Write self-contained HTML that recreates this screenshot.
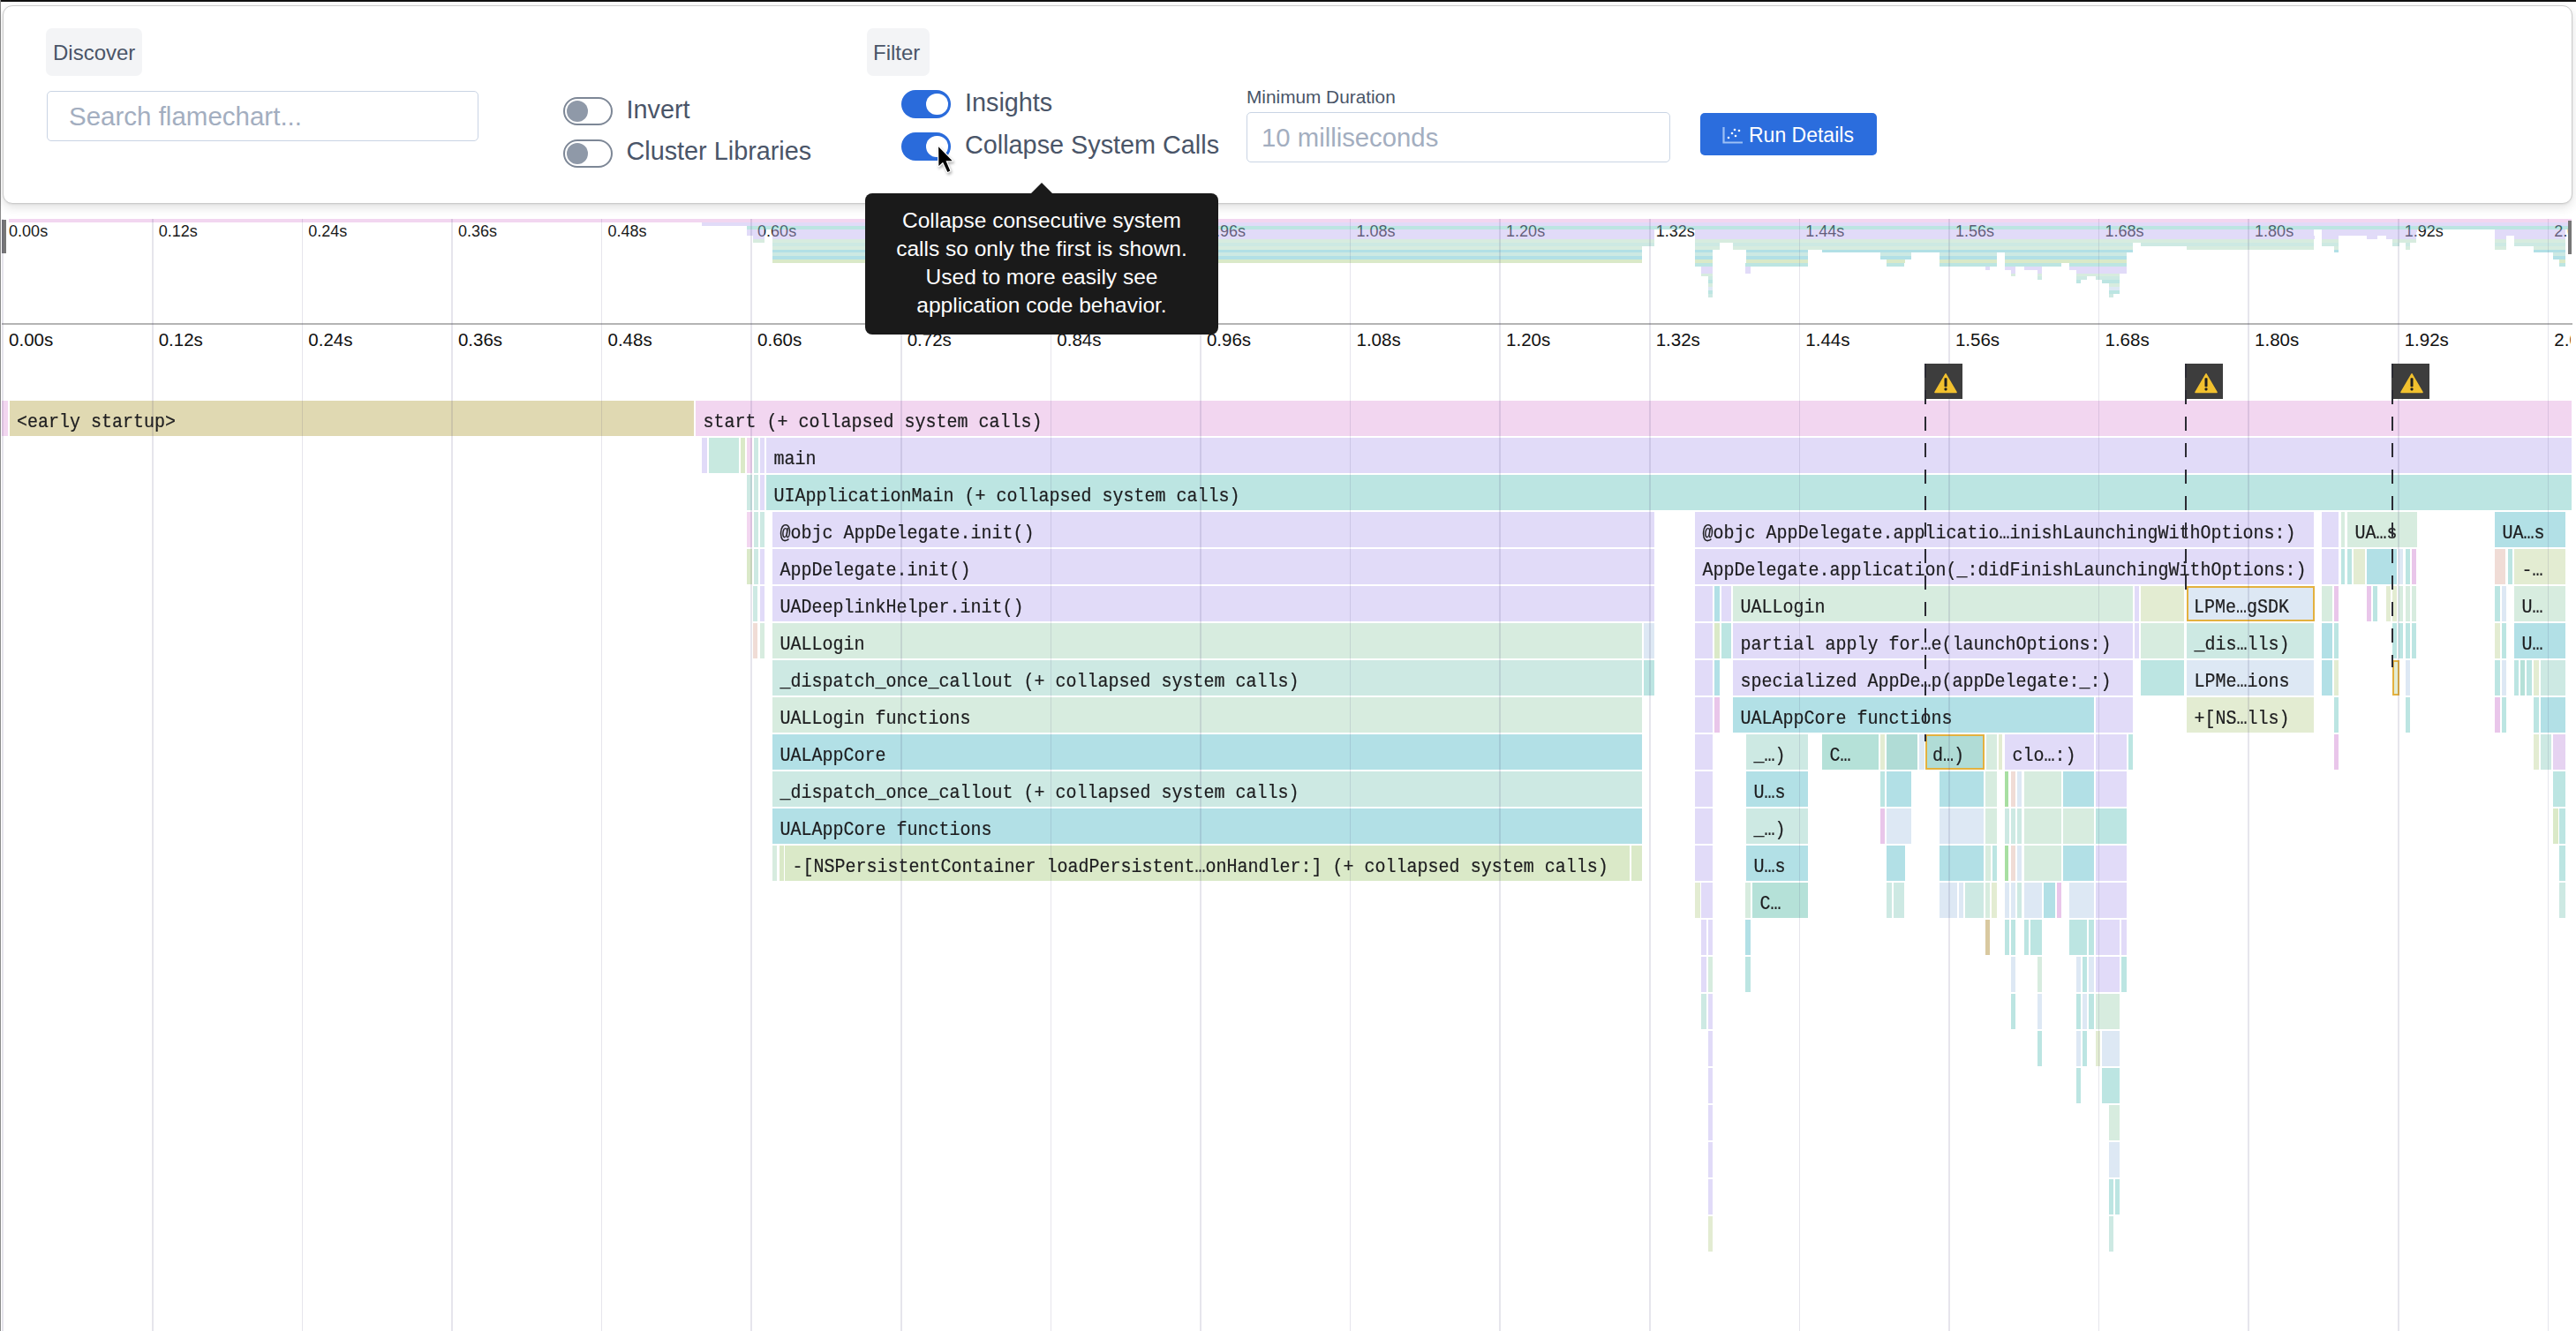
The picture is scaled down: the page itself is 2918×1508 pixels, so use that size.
<!DOCTYPE html><html><head><meta charset="utf-8"><style>
html,body{margin:0;padding:0;background:#fff;}
body{width:2918px;height:1508px;overflow:hidden;position:relative;font-family:"Liberation Sans",sans-serif;}
.a{position:absolute;}
.t{position:absolute;white-space:pre;line-height:1;}
.b{position:absolute;height:40px;overflow:hidden;}
.bt{position:absolute;left:0;top:0;white-space:pre;font:20px/1 "Liberation Mono",monospace;color:#1d1d1f;transform:scaleY(1.13);transform-origin:0 15.33px;-webkit-text-stroke:0.2px #1d1d1f;}
.m{position:absolute;}
.g{position:absolute;width:1.6px;background:rgba(80,70,120,0.14);}

</style></head><body>
<div class="a" style="left:0;top:0;width:2918px;height:2px;background:#111"></div>
<div class="a" style="left:0;top:0;width:1px;height:1508px;background:#8a8a8a"></div>
<div class="a" style="left:0;top:240px;width:2912px;height:40px;overflow:hidden">
<div class="t" style="left:10.1px;top:12.76px;font-size:18px;color:#1a1a1a">0.00s</div>
<div class="t" style="left:179.7px;top:12.76px;font-size:18px;color:#1a1a1a">0.12s</div>
<div class="t" style="left:349.3px;top:12.76px;font-size:18px;color:#1a1a1a">0.24s</div>
<div class="t" style="left:518.9px;top:12.76px;font-size:18px;color:#1a1a1a">0.36s</div>
<div class="t" style="left:688.5px;top:12.76px;font-size:18px;color:#1a1a1a">0.48s</div>
<div class="t" style="left:858.1px;top:12.76px;font-size:18px;color:#1a1a1a">0.60s</div>
<div class="t" style="left:1027.7px;top:12.76px;font-size:18px;color:#1a1a1a">0.72s</div>
<div class="t" style="left:1197.3px;top:12.76px;font-size:18px;color:#1a1a1a">0.84s</div>
<div class="t" style="left:1366.9px;top:12.76px;font-size:18px;color:#1a1a1a">0.96s</div>
<div class="t" style="left:1536.5px;top:12.76px;font-size:18px;color:#1a1a1a">1.08s</div>
<div class="t" style="left:1706.1px;top:12.76px;font-size:18px;color:#1a1a1a">1.20s</div>
<div class="t" style="left:1875.7px;top:12.76px;font-size:18px;color:#1a1a1a">1.32s</div>
<div class="t" style="left:2045.3px;top:12.76px;font-size:18px;color:#1a1a1a">1.44s</div>
<div class="t" style="left:2214.9px;top:12.76px;font-size:18px;color:#1a1a1a">1.56s</div>
<div class="t" style="left:2384.5px;top:12.76px;font-size:18px;color:#1a1a1a">1.68s</div>
<div class="t" style="left:2554.1px;top:12.76px;font-size:18px;color:#1a1a1a">1.80s</div>
<div class="t" style="left:2723.7px;top:12.76px;font-size:18px;color:#1a1a1a">1.92s</div>
<div class="t" style="left:2893.3px;top:12.76px;font-size:18px;color:#1a1a1a">2.04s</div>
</div>
<div class="m" style="left:9.5px;top:248px;width:2903px;height:4px;background:rgba(226,164,222,0.45)"></div>
<div class="m" style="left:795px;top:252px;width:2117.5px;height:4px;background:rgba(188,175,239,0.45)"></div>
<div class="m" style="left:846px;top:256px;width:2066.5px;height:4px;background:rgba(106,197,191,0.45)"></div>
<div class="m" style="left:846px;top:260px;width:20px;height:3px;background:rgba(188,175,239,0.45)"></div>
<div class="m" style="left:875px;top:260px;width:999px;height:3px;background:rgba(188,175,239,0.45)"></div>
<div class="m" style="left:1920px;top:260px;width:700.5px;height:3px;background:rgba(188,175,239,0.45)"></div>
<div class="m" style="left:2630px;top:260px;width:108px;height:3px;background:rgba(188,175,239,0.45)"></div>
<div class="m" style="left:2826px;top:260px;width:79.5px;height:3px;background:rgba(188,175,239,0.45)"></div>
<div class="m" style="left:846px;top:263px;width:20px;height:4px;background:rgba(188,175,239,0.45)"></div>
<div class="m" style="left:875px;top:263px;width:999px;height:4px;background:rgba(188,175,239,0.45)"></div>
<div class="m" style="left:1920px;top:263px;width:700.5px;height:4px;background:rgba(188,175,239,0.45)"></div>
<div class="m" style="left:2630px;top:263px;width:107px;height:4px;background:rgba(188,175,239,0.45)"></div>
<div class="m" style="left:2826px;top:263px;width:79.5px;height:4px;background:rgba(188,175,239,0.45)"></div>
<div class="m" style="left:853px;top:267px;width:13px;height:4px;background:rgba(188,175,239,0.45)"></div>
<div class="m" style="left:875px;top:267px;width:999px;height:4px;background:rgba(188,175,239,0.45)"></div>
<div class="m" style="left:1920px;top:267px;width:701.5px;height:4px;background:rgba(188,175,239,0.45)"></div>
<div class="m" style="left:2630px;top:267px;width:19px;height:4px;background:rgba(188,175,239,0.45)"></div>
<div class="m" style="left:2681px;top:267px;width:12px;height:4px;background:rgba(188,175,239,0.45)"></div>
<div class="m" style="left:2703px;top:267px;width:34px;height:4px;background:rgba(188,175,239,0.45)"></div>
<div class="m" style="left:2826px;top:267px;width:13px;height:4px;background:rgba(188,175,239,0.45)"></div>
<div class="m" style="left:2848px;top:267px;width:57.5px;height:4px;background:rgba(188,175,239,0.45)"></div>
<div class="m" style="left:853px;top:271px;width:13px;height:4px;background:rgba(166,213,184,0.45)"></div>
<div class="m" style="left:875px;top:271px;width:999px;height:4px;background:rgba(166,213,184,0.45)"></div>
<div class="m" style="left:1920px;top:271px;width:700.5px;height:4px;background:rgba(166,213,184,0.45)"></div>
<div class="m" style="left:2630px;top:271px;width:19px;height:4px;background:rgba(166,213,184,0.45)"></div>
<div class="m" style="left:2710px;top:271px;width:27px;height:4px;background:rgba(166,213,184,0.45)"></div>
<div class="m" style="left:2826px;top:271px;width:13px;height:4px;background:rgba(166,213,184,0.45)"></div>
<div class="m" style="left:2848px;top:271px;width:57.5px;height:4px;background:rgba(166,213,184,0.45)"></div>
<div class="m" style="left:875px;top:275px;width:999px;height:4px;background:rgba(144,206,193,0.45)"></div>
<div class="m" style="left:1920px;top:275px;width:27.5px;height:4px;background:rgba(144,206,193,0.45)"></div>
<div class="m" style="left:1963px;top:275px;width:453px;height:4px;background:rgba(144,206,193,0.45)"></div>
<div class="m" style="left:2425px;top:275px;width:195.5px;height:4px;background:rgba(144,206,193,0.45)"></div>
<div class="m" style="left:2630px;top:275px;width:19px;height:4px;background:rgba(144,206,193,0.45)"></div>
<div class="m" style="left:2709.5px;top:275px;width:8px;height:4px;background:rgba(144,206,193,0.45)"></div>
<div class="m" style="left:2725px;top:275px;width:5px;height:4px;background:rgba(144,206,193,0.45)"></div>
<div class="m" style="left:2826px;top:275px;width:13px;height:4px;background:rgba(144,206,193,0.45)"></div>
<div class="m" style="left:2848px;top:275px;width:57.5px;height:4px;background:rgba(144,206,193,0.45)"></div>
<div class="m" style="left:875px;top:279px;width:985px;height:4px;background:rgba(166,213,184,0.45)"></div>
<div class="m" style="left:1920px;top:279px;width:27.5px;height:4px;background:rgba(166,213,184,0.45)"></div>
<div class="m" style="left:1963px;top:279px;width:453px;height:4px;background:rgba(166,213,184,0.45)"></div>
<div class="m" style="left:2477px;top:279px;width:143.5px;height:4px;background:rgba(166,213,184,0.45)"></div>
<div class="m" style="left:2644px;top:279px;width:5px;height:4px;background:rgba(166,213,184,0.45)"></div>
<div class="m" style="left:2725px;top:279px;width:5px;height:4px;background:rgba(166,213,184,0.45)"></div>
<div class="m" style="left:2826px;top:279px;width:13px;height:4px;background:rgba(166,213,184,0.45)"></div>
<div class="m" style="left:2870px;top:279px;width:35.5px;height:4px;background:rgba(166,213,184,0.45)"></div>
<div class="m" style="left:875px;top:283px;width:985px;height:3px;background:rgba(84,186,199,0.45)"></div>
<div class="m" style="left:1920px;top:283px;width:19.5px;height:3px;background:rgba(84,186,199,0.45)"></div>
<div class="m" style="left:1978px;top:283px;width:70px;height:3px;background:rgba(84,186,199,0.45)"></div>
<div class="m" style="left:2064px;top:283px;width:352px;height:3px;background:rgba(84,186,199,0.45)"></div>
<div class="m" style="left:2644px;top:283px;width:5px;height:3px;background:rgba(84,186,199,0.45)"></div>
<div class="m" style="left:2870px;top:283px;width:35.5px;height:3px;background:rgba(84,186,199,0.45)"></div>
<div class="m" style="left:875px;top:286px;width:985px;height:4px;background:rgba(144,206,193,0.45)"></div>
<div class="m" style="left:1920px;top:286px;width:19.5px;height:4px;background:rgba(144,206,193,0.45)"></div>
<div class="m" style="left:1978px;top:286px;width:70px;height:4px;background:rgba(144,206,193,0.45)"></div>
<div class="m" style="left:2130px;top:286px;width:35px;height:4px;background:rgba(144,206,193,0.45)"></div>
<div class="m" style="left:2197px;top:286px;width:65px;height:4px;background:rgba(144,206,193,0.45)"></div>
<div class="m" style="left:2271px;top:286px;width:138px;height:4px;background:rgba(144,206,193,0.45)"></div>
<div class="m" style="left:2892px;top:286px;width:13.5px;height:4px;background:rgba(144,206,193,0.45)"></div>
<div class="m" style="left:875px;top:290px;width:985px;height:4px;background:rgba(84,186,199,0.45)"></div>
<div class="m" style="left:1920px;top:290px;width:19.5px;height:4px;background:rgba(84,186,199,0.45)"></div>
<div class="m" style="left:1978px;top:290px;width:70px;height:4px;background:rgba(84,186,199,0.45)"></div>
<div class="m" style="left:2130px;top:290px;width:35px;height:4px;background:rgba(84,186,199,0.45)"></div>
<div class="m" style="left:2197px;top:290px;width:65px;height:4px;background:rgba(84,186,199,0.45)"></div>
<div class="m" style="left:2271px;top:290px;width:138px;height:4px;background:rgba(84,186,199,0.45)"></div>
<div class="m" style="left:2892px;top:290px;width:13.5px;height:4px;background:rgba(84,186,199,0.45)"></div>
<div class="m" style="left:875px;top:294px;width:985px;height:4px;background:rgba(173,206,133,0.45)"></div>
<div class="m" style="left:1920px;top:294px;width:19.5px;height:4px;background:rgba(173,206,133,0.45)"></div>
<div class="m" style="left:1978px;top:294px;width:70px;height:4px;background:rgba(173,206,133,0.45)"></div>
<div class="m" style="left:2137px;top:294px;width:21px;height:4px;background:rgba(173,206,133,0.45)"></div>
<div class="m" style="left:2197px;top:294px;width:65px;height:4px;background:rgba(173,206,133,0.45)"></div>
<div class="m" style="left:2271px;top:294px;width:138px;height:4px;background:rgba(173,206,133,0.45)"></div>
<div class="m" style="left:2899px;top:294px;width:6.5px;height:4px;background:rgba(173,206,133,0.45)"></div>
<div class="m" style="left:1920px;top:298px;width:19.5px;height:4px;background:rgba(106,197,191,0.45)"></div>
<div class="m" style="left:1977px;top:298px;width:71px;height:4px;background:rgba(106,197,191,0.45)"></div>
<div class="m" style="left:2137px;top:298px;width:20px;height:4px;background:rgba(106,197,191,0.45)"></div>
<div class="m" style="left:2197px;top:298px;width:65px;height:4px;background:rgba(106,197,191,0.45)"></div>
<div class="m" style="left:2271px;top:298px;width:64px;height:4px;background:rgba(106,197,191,0.45)"></div>
<div class="m" style="left:2344px;top:298px;width:65px;height:4px;background:rgba(106,197,191,0.45)"></div>
<div class="m" style="left:2899px;top:298px;width:6.5px;height:4px;background:rgba(106,197,191,0.45)"></div>
<div class="m" style="left:1927px;top:302px;width:12.5px;height:4px;background:rgba(188,175,239,0.45)"></div>
<div class="m" style="left:1977px;top:302px;width:6px;height:4px;background:rgba(188,175,239,0.45)"></div>
<div class="m" style="left:2249px;top:302px;width:5px;height:4px;background:rgba(188,175,239,0.45)"></div>
<div class="m" style="left:2271px;top:302px;width:12px;height:4px;background:rgba(188,175,239,0.45)"></div>
<div class="m" style="left:2293px;top:302px;width:20px;height:4px;background:rgba(188,175,239,0.45)"></div>
<div class="m" style="left:2344px;top:302px;width:65px;height:4px;background:rgba(188,175,239,0.45)"></div>
<div class="m" style="left:1927px;top:306px;width:12.5px;height:4px;background:rgba(188,175,239,0.45)"></div>
<div class="m" style="left:1977px;top:306px;width:6px;height:4px;background:rgba(188,175,239,0.45)"></div>
<div class="m" style="left:2278px;top:306px;width:5px;height:4px;background:rgba(188,175,239,0.45)"></div>
<div class="m" style="left:2308px;top:306px;width:5px;height:4px;background:rgba(188,175,239,0.45)"></div>
<div class="m" style="left:2352px;top:306px;width:57px;height:4px;background:rgba(188,175,239,0.45)"></div>
<div class="m" style="left:1927px;top:310px;width:12.5px;height:3px;background:rgba(166,213,184,0.45)"></div>
<div class="m" style="left:2278px;top:310px;width:5px;height:3px;background:rgba(166,213,184,0.45)"></div>
<div class="m" style="left:2308px;top:310px;width:5px;height:3px;background:rgba(166,213,184,0.45)"></div>
<div class="m" style="left:2352px;top:310px;width:49px;height:3px;background:rgba(166,213,184,0.45)"></div>
<div class="m" style="left:1934.5px;top:313px;width:5px;height:4px;background:rgba(144,206,193,0.45)"></div>
<div class="m" style="left:2308px;top:313px;width:5px;height:4px;background:rgba(144,206,193,0.45)"></div>
<div class="m" style="left:2352px;top:313px;width:12px;height:4px;background:rgba(144,206,193,0.45)"></div>
<div class="m" style="left:2374px;top:313px;width:27px;height:4px;background:rgba(144,206,193,0.45)"></div>
<div class="m" style="left:1934.5px;top:317px;width:5px;height:4px;background:rgba(106,197,191,0.45)"></div>
<div class="m" style="left:2352px;top:317px;width:5px;height:4px;background:rgba(106,197,191,0.45)"></div>
<div class="m" style="left:2381px;top:317px;width:20px;height:4px;background:rgba(106,197,191,0.45)"></div>
<div class="m" style="left:1934.5px;top:321px;width:5px;height:4px;background:rgba(166,213,184,0.45)"></div>
<div class="m" style="left:2389px;top:321px;width:12px;height:4px;background:rgba(166,213,184,0.45)"></div>
<div class="m" style="left:1934.5px;top:325px;width:5px;height:4px;background:rgba(179,204,231,0.45)"></div>
<div class="m" style="left:2389px;top:325px;width:12px;height:4px;background:rgba(179,204,231,0.45)"></div>
<div class="m" style="left:1934.5px;top:329px;width:5px;height:4px;background:rgba(106,197,191,0.45)"></div>
<div class="m" style="left:2389px;top:329px;width:12px;height:4px;background:rgba(106,197,191,0.45)"></div>
<div class="m" style="left:1934.5px;top:333px;width:5px;height:4px;background:rgba(144,206,193,0.45)"></div>
<div class="m" style="left:2389px;top:333px;width:5px;height:4px;background:rgba(144,206,193,0.45)"></div>
<div class="a" style="left:2px;top:249px;width:5px;height:38px;background:#777"></div>
<div class="a" style="left:2908.5px;top:249.5px;width:4px;height:38px;background:#777"></div>
<div class="a" style="left:2px;top:365.8px;width:2912px;height:2px;background:#b4b4b4"></div>
<div class="a" style="left:0;top:368px;width:2912px;height:40px;overflow:hidden">
<div class="t" style="left:10.1px;top:6.65px;font-size:20.5px;color:#111">0.00s</div>
<div class="t" style="left:179.7px;top:6.65px;font-size:20.5px;color:#111">0.12s</div>
<div class="t" style="left:349.3px;top:6.65px;font-size:20.5px;color:#111">0.24s</div>
<div class="t" style="left:518.9px;top:6.65px;font-size:20.5px;color:#111">0.36s</div>
<div class="t" style="left:688.5px;top:6.65px;font-size:20.5px;color:#111">0.48s</div>
<div class="t" style="left:858.1px;top:6.65px;font-size:20.5px;color:#111">0.60s</div>
<div class="t" style="left:1027.7px;top:6.65px;font-size:20.5px;color:#111">0.72s</div>
<div class="t" style="left:1197.3px;top:6.65px;font-size:20.5px;color:#111">0.84s</div>
<div class="t" style="left:1366.9px;top:6.65px;font-size:20.5px;color:#111">0.96s</div>
<div class="t" style="left:1536.5px;top:6.65px;font-size:20.5px;color:#111">1.08s</div>
<div class="t" style="left:1706.1px;top:6.65px;font-size:20.5px;color:#111">1.20s</div>
<div class="t" style="left:1875.7px;top:6.65px;font-size:20.5px;color:#111">1.32s</div>
<div class="t" style="left:2045.3px;top:6.65px;font-size:20.5px;color:#111">1.44s</div>
<div class="t" style="left:2214.9px;top:6.65px;font-size:20.5px;color:#111">1.56s</div>
<div class="t" style="left:2384.5px;top:6.65px;font-size:20.5px;color:#111">1.68s</div>
<div class="t" style="left:2554.1px;top:6.65px;font-size:20.5px;color:#111">1.80s</div>
<div class="t" style="left:2723.7px;top:6.65px;font-size:20.5px;color:#111">1.92s</div>
<div class="t" style="left:2893.3px;top:6.65px;font-size:20.5px;color:#111">2.04s</div>
</div>
<div class="b" style="left:2px;top:454px;width:7px;background:#f2d6f0"></div>
<div class="b" style="left:10.5px;top:454px;width:775.5px;background:#e0d9b2"><span class="bt" style="left:8.5px;top:14.67px">&lt;early startup&gt;</span></div>
<div class="b" style="left:788px;top:454px;width:2124.5px;background:#f2d6f0"><span class="bt" style="left:8.5px;top:14.67px">start (+ collapsed system calls)</span></div>
<div class="b" style="left:795px;top:496px;width:5.5px;background:#e1dbf8"></div>
<div class="b" style="left:803px;top:496px;width:34px;background:#c8e9e0"></div>
<div class="b" style="left:839px;top:496px;width:5px;background:#dae9c8"></div>
<div class="b" style="left:846px;top:496px;width:5.5px;background:#f2d6f0"></div>
<div class="b" style="left:854px;top:496px;width:5px;background:#cde9e3"></div>
<div class="b" style="left:861px;top:496px;width:5px;background:#e1dbf8"></div>
<div class="b" style="left:868px;top:496px;width:2044.5px;background:#e1dbf8"><span class="bt" style="left:8.5px;top:14.67px">main</span></div>
<div class="b" style="left:846px;top:538px;width:5.5px;background:#cde9e3"></div>
<div class="b" style="left:854px;top:538px;width:5px;background:#cde9e3"></div>
<div class="b" style="left:861px;top:538px;width:5px;background:#e1dbf8"></div>
<div class="b" style="left:868px;top:538px;width:2044.5px;background:#bce5e2"><span class="bt" style="left:8.5px;top:14.67px">UIApplicationMain (+ collapsed system calls)</span></div>
<div class="b" style="left:846px;top:580px;width:5.5px;background:#f2d6f0"></div>
<div class="b" style="left:854px;top:580px;width:5px;background:#cde9e3"></div>
<div class="b" style="left:861px;top:580px;width:5px;background:#cde9e3"></div>
<div class="b" style="left:875px;top:580px;width:999px;background:#e1dbf8"><span class="bt" style="left:8.5px;top:14.67px">@objc AppDelegate.init()</span></div>
<div class="b" style="left:1920px;top:580px;width:700.5px;background:#e1dbf8"><span class="bt" style="left:8.5px;top:14.67px">@objc AppDelegate.applicatio…inishLaunchingWithOptions:)</span></div>
<div class="b" style="left:2630px;top:580px;width:19px;background:#e1dbf8"></div>
<div class="b" style="left:2651.5px;top:580px;width:4.5px;background:#d7ecdf"></div>
<div class="b" style="left:2659px;top:580px;width:79px;background:#d7ecdf"><span class="bt" style="left:8.5px;top:14.67px">UA…s</span></div>
<div class="b" style="left:2826px;top:580px;width:79.5px;background:#b2e0e6"><span class="bt" style="left:8.5px;top:14.67px">UA…s</span></div>
<div class="b" style="left:846px;top:622px;width:5.5px;background:#dae9c8"></div>
<div class="b" style="left:854px;top:622px;width:5px;background:#cde9e3"></div>
<div class="b" style="left:861px;top:622px;width:5px;background:#e1dbf8"></div>
<div class="b" style="left:875px;top:622px;width:999px;background:#e1dbf8"><span class="bt" style="left:8.5px;top:14.67px">AppDelegate.init()</span></div>
<div class="b" style="left:1920px;top:622px;width:700.5px;background:#e1dbf8"><span class="bt" style="left:8.5px;top:14.67px">AppDelegate.application(_:didFinishLaunchingWithOptions:)</span></div>
<div class="b" style="left:2630px;top:622px;width:19px;background:#e1dbf8"></div>
<div class="b" style="left:2651.5px;top:622px;width:4.5px;background:#bce5e2"></div>
<div class="b" style="left:2659px;top:622px;width:5px;background:#bce5e2"></div>
<div class="b" style="left:2666px;top:622px;width:13px;background:#e3ecd2"></div>
<div class="b" style="left:2681px;top:622px;width:34px;background:#b2e0e6"></div>
<div class="b" style="left:2717px;top:622px;width:5px;background:#dde8f4"></div>
<div class="b" style="left:2725px;top:622px;width:5px;background:#bce5e2"></div>
<div class="b" style="left:2732px;top:622px;width:5px;background:#e9c6ea"></div>
<div class="b" style="left:2826px;top:622px;width:12px;background:#f0dcd6"></div>
<div class="b" style="left:2841px;top:622px;width:5px;background:#bce5e2"></div>
<div class="b" style="left:2848px;top:622px;width:57.5px;background:#e3ecd2"><span class="bt" style="left:8.5px;top:14.67px">-…</span></div>
<div class="b" style="left:853px;top:664px;width:5px;background:#cde9e3"></div>
<div class="b" style="left:861px;top:664px;width:5px;background:#e1dbf8"></div>
<div class="b" style="left:875px;top:664px;width:999px;background:#e1dbf8"><span class="bt" style="left:8.5px;top:14.67px">UADeeplinkHelper.init()</span></div>
<div class="b" style="left:1920px;top:664px;width:19.5px;background:#e1dbf8"></div>
<div class="b" style="left:1941.5px;top:664px;width:6px;background:#b2e0e6"></div>
<div class="b" style="left:1949.5px;top:664px;width:11.5px;background:#e1dbf8"></div>
<div class="b" style="left:1963px;top:664px;width:453px;background:#d7ecdf"><span class="bt" style="left:8.5px;top:14.67px">UALLogin</span></div>
<div class="b" style="left:2418px;top:664px;width:5px;background:#e1dbf8"></div>
<div class="b" style="left:2425px;top:664px;width:49px;background:#e3ecd2"></div>
<div class="b" style="left:2476.5px;top:664px;width:145px;background:#dde8f4;box-shadow:inset 0 0 0 2px #e3b13f"><span class="bt" style="left:8.5px;top:14.67px">LPMe…gSDK</span></div>
<div class="b" style="left:2630px;top:664px;width:12px;background:#d7ecdf"></div>
<div class="b" style="left:2644px;top:664px;width:5px;background:#e9c6ea"></div>
<div class="b" style="left:2681px;top:664px;width:5px;background:#e9c6ea"></div>
<div class="b" style="left:2688px;top:664px;width:5px;background:#bce5e2"></div>
<div class="b" style="left:2703px;top:664px;width:5px;background:#e3ecd2"></div>
<div class="b" style="left:2710px;top:664px;width:5px;background:#e3ecd2"></div>
<div class="b" style="left:2717px;top:664px;width:5px;background:#d7ecdf"></div>
<div class="b" style="left:2725px;top:664px;width:5px;background:#d7ecdf"></div>
<div class="b" style="left:2732px;top:664px;width:5px;background:#d7ecdf"></div>
<div class="b" style="left:2826px;top:664px;width:6px;background:#bce5e2"></div>
<div class="b" style="left:2834px;top:664px;width:5px;background:#dde8f4"></div>
<div class="b" style="left:2848px;top:664px;width:57.5px;background:#d7ecdf"><span class="bt" style="left:8.5px;top:14.67px">U…</span></div>
<div class="b" style="left:853px;top:706px;width:5px;background:#f0dcd6"></div>
<div class="b" style="left:861px;top:706px;width:5px;background:#d7ecdf"></div>
<div class="b" style="left:875px;top:706px;width:985px;background:#d7ecdf"><span class="bt" style="left:8.5px;top:14.67px">UALLogin</span></div>
<div class="b" style="left:1862px;top:706px;width:12px;background:#dde8f4"></div>
<div class="b" style="left:1920px;top:706px;width:19.5px;background:#e1dbf8"></div>
<div class="b" style="left:1941.5px;top:706px;width:6px;background:#dae9c8"></div>
<div class="b" style="left:1949.5px;top:706px;width:11.5px;background:#bce5e2"></div>
<div class="b" style="left:1963px;top:706px;width:453px;background:#e1dbf8"><span class="bt" style="left:8.5px;top:14.67px">partial apply for…e(launchOptions:)</span></div>
<div class="b" style="left:2418px;top:706px;width:5px;background:#e1dbf8"></div>
<div class="b" style="left:2425px;top:706px;width:49px;background:#d7ecdf"></div>
<div class="b" style="left:2477px;top:706px;width:143.5px;background:#cde9e3"><span class="bt" style="left:8.5px;top:14.67px">_dis…lls)</span></div>
<div class="b" style="left:2630px;top:706px;width:12px;background:#b2e0e6"></div>
<div class="b" style="left:2644px;top:706px;width:5px;background:#bce5e2"></div>
<div class="b" style="left:2710px;top:706px;width:5px;background:#bce5e2"></div>
<div class="b" style="left:2717px;top:706px;width:5px;background:#bce5e2"></div>
<div class="b" style="left:2725px;top:706px;width:5px;background:#bce5e2"></div>
<div class="b" style="left:2732px;top:706px;width:5px;background:#bce5e2"></div>
<div class="b" style="left:2826px;top:706px;width:6px;background:#e3ecd2"></div>
<div class="b" style="left:2834px;top:706px;width:5px;background:#bce5e2"></div>
<div class="b" style="left:2848px;top:706px;width:57.5px;background:#b2e0e6"><span class="bt" style="left:8.5px;top:14.67px">U…</span></div>
<div class="b" style="left:875px;top:748px;width:985px;background:#cde9e3"><span class="bt" style="left:8.5px;top:14.67px">_dispatch_once_callout (+ collapsed system calls)</span></div>
<div class="b" style="left:1862px;top:748px;width:12px;background:#bce5e2"></div>
<div class="b" style="left:1920px;top:748px;width:19.5px;background:#e1dbf8"></div>
<div class="b" style="left:1941.5px;top:748px;width:6px;background:#b2e0e6"></div>
<div class="b" style="left:1963px;top:748px;width:453px;background:#e1dbf8"><span class="bt" style="left:8.5px;top:14.67px">specialized AppDe…p(appDelegate:_:)</span></div>
<div class="b" style="left:2425px;top:748px;width:49px;background:#bce5e2"></div>
<div class="b" style="left:2477px;top:748px;width:143.5px;background:#dde8f4"><span class="bt" style="left:8.5px;top:14.67px">LPMe…ions</span></div>
<div class="b" style="left:2630px;top:748px;width:12px;background:#b2e0e6"></div>
<div class="b" style="left:2644px;top:748px;width:5px;background:#e3ecd2"></div>
<div class="b" style="left:2709.5px;top:748px;width:8px;background:#e3ecd2;box-shadow:inset 0 0 0 2px #e3b13f"></div>
<div class="b" style="left:2725px;top:748px;width:5px;background:#dde8f4"></div>
<div class="b" style="left:2826px;top:748px;width:6px;background:#bce5e2"></div>
<div class="b" style="left:2834px;top:748px;width:5px;background:#dde8f4"></div>
<div class="b" style="left:2848px;top:748px;width:5px;background:#bce5e2"></div>
<div class="b" style="left:2855px;top:748px;width:5px;background:#b5e1d8"></div>
<div class="b" style="left:2862px;top:748px;width:6px;background:#bce5e2"></div>
<div class="b" style="left:2870px;top:748px;width:6px;background:#e3ecd2"></div>
<div class="b" style="left:2878px;top:748px;width:27.5px;background:#cde9e3"></div>
<div class="b" style="left:875px;top:790px;width:985px;background:#d7ecdf"><span class="bt" style="left:8.5px;top:14.67px">UALLogin functions</span></div>
<div class="b" style="left:1920px;top:790px;width:19.5px;background:#e1dbf8"></div>
<div class="b" style="left:1941.5px;top:790px;width:6px;background:#e9c6ea"></div>
<div class="b" style="left:1963px;top:790px;width:409px;background:#b2e0e6"><span class="bt" style="left:8.5px;top:14.67px">UALAppCore functions</span></div>
<div class="b" style="left:2374px;top:790px;width:42px;background:#e1dbf8"></div>
<div class="b" style="left:2477px;top:790px;width:143.5px;background:#e3ecd2"><span class="bt" style="left:8.5px;top:14.67px">+[NS…lls)</span></div>
<div class="b" style="left:2644px;top:790px;width:5px;background:#bce5e2"></div>
<div class="b" style="left:2725px;top:790px;width:5px;background:#bce5e2"></div>
<div class="b" style="left:2826px;top:790px;width:6px;background:#e9c6ea"></div>
<div class="b" style="left:2834px;top:790px;width:5px;background:#bce5e2"></div>
<div class="b" style="left:2870px;top:790px;width:6px;background:#bce5e2"></div>
<div class="b" style="left:2878px;top:790px;width:27.5px;background:#b2e0e6"></div>
<div class="b" style="left:875px;top:832px;width:985px;background:#b2e0e6"><span class="bt" style="left:8.5px;top:14.67px">UALAppCore</span></div>
<div class="b" style="left:1920px;top:832px;width:19.5px;background:#e1dbf8"></div>
<div class="b" style="left:1978px;top:832px;width:70px;background:#cde9e3"><span class="bt" style="left:8.5px;top:14.67px">_…)</span></div>
<div class="b" style="left:2064px;top:832px;width:64px;background:#b5e1d8"><span class="bt" style="left:8.5px;top:14.67px">C…</span></div>
<div class="b" style="left:2130px;top:832px;width:5px;background:#e3ecd2"></div>
<div class="b" style="left:2137px;top:832px;width:35px;background:#b0dcd6"></div>
<div class="b" style="left:2174px;top:832px;width:6px;background:#dde8f4"></div>
<div class="b" style="left:2180.5px;top:832px;width:67.5px;background:#b0dcd6;box-shadow:inset 0 0 0 2px #e3b13f"><span class="bt" style="left:8.5px;top:14.67px">d…)</span></div>
<div class="b" style="left:2250px;top:832px;width:12px;background:#d7ecdf"></div>
<div class="b" style="left:2264px;top:832px;width:4px;background:#e3ecd2"></div>
<div class="b" style="left:2271px;top:832px;width:101px;background:#e1dbf8"><span class="bt" style="left:8.5px;top:14.67px">clo…:)</span></div>
<div class="b" style="left:2374px;top:832px;width:35px;background:#e1dbf8"></div>
<div class="b" style="left:2411px;top:832px;width:5px;background:#bce5e2"></div>
<div class="b" style="left:2644px;top:832px;width:5px;background:#e9c6ea"></div>
<div class="b" style="left:2870px;top:832px;width:6px;background:#e3ecd2"></div>
<div class="b" style="left:2878px;top:832px;width:12px;background:#cde9e3"></div>
<div class="b" style="left:2892px;top:832px;width:13.5px;background:#e6d3f1"></div>
<div class="b" style="left:875px;top:874px;width:985px;background:#cde9e3"><span class="bt" style="left:8.5px;top:14.67px">_dispatch_once_callout (+ collapsed system calls)</span></div>
<div class="b" style="left:1920px;top:874px;width:19.5px;background:#e1dbf8"></div>
<div class="b" style="left:1978px;top:874px;width:70px;background:#b2e0e6"><span class="bt" style="left:8.5px;top:14.67px">U…s</span></div>
<div class="b" style="left:2130px;top:874px;width:5px;background:#bce5e2"></div>
<div class="b" style="left:2137px;top:874px;width:28px;background:#b2e0e6"></div>
<div class="b" style="left:2197px;top:874px;width:50px;background:#b2e0e6"></div>
<div class="b" style="left:2249px;top:874px;width:13px;background:#d7ecdf"></div>
<div class="b" style="left:2271px;top:874px;width:4px;background:#a8dfa2"></div>
<div class="b" style="left:2278px;top:874px;width:5px;background:#f0dcd6"></div>
<div class="b" style="left:2285px;top:874px;width:5px;background:#dde8f4"></div>
<div class="b" style="left:2293px;top:874px;width:42px;background:#d7ecdf"></div>
<div class="b" style="left:2337px;top:874px;width:35px;background:#b2e0e6"></div>
<div class="b" style="left:2374px;top:874px;width:35px;background:#e1dbf8"></div>
<div class="b" style="left:2892px;top:874px;width:13.5px;background:#bce5e2"></div>
<div class="b" style="left:875px;top:916px;width:985px;background:#b2e0e6"><span class="bt" style="left:8.5px;top:14.67px">UALAppCore functions</span></div>
<div class="b" style="left:1920px;top:916px;width:19.5px;background:#e1dbf8"></div>
<div class="b" style="left:1978px;top:916px;width:70px;background:#cde9e3"><span class="bt" style="left:8.5px;top:14.67px">_…)</span></div>
<div class="b" style="left:2130px;top:916px;width:5px;background:#e9c6ea"></div>
<div class="b" style="left:2137px;top:916px;width:28px;background:#dde8f4"></div>
<div class="b" style="left:2197px;top:916px;width:50px;background:#dde8f4"></div>
<div class="b" style="left:2249px;top:916px;width:13px;background:#d7ecdf"></div>
<div class="b" style="left:2271px;top:916px;width:5px;background:#cde9e3"></div>
<div class="b" style="left:2278px;top:916px;width:5px;background:#cde9e3"></div>
<div class="b" style="left:2285px;top:916px;width:5px;background:#cde9e3"></div>
<div class="b" style="left:2293px;top:916px;width:42px;background:#d7ecdf"></div>
<div class="b" style="left:2337px;top:916px;width:35px;background:#d7ecdf"></div>
<div class="b" style="left:2374px;top:916px;width:35px;background:#bce5e2"></div>
<div class="b" style="left:2892px;top:916px;width:6px;background:#dae9c8"></div>
<div class="b" style="left:2899px;top:916px;width:6.5px;background:#bce5e2"></div>
<div class="b" style="left:875px;top:958px;width:5px;background:#d7ecdf"></div>
<div class="b" style="left:882.5px;top:958px;width:5.5px;background:#dae9c8"></div>
<div class="b" style="left:889px;top:958px;width:957px;background:#dae9c8"><span class="bt" style="left:8.5px;top:14.67px">-[NSPersistentContainer loadPersistent…onHandler:] (+ collapsed system calls)</span></div>
<div class="b" style="left:1848px;top:958px;width:12px;background:#dae9c8"></div>
<div class="b" style="left:1920px;top:958px;width:19.5px;background:#e1dbf8"></div>
<div class="b" style="left:1978px;top:958px;width:70px;background:#b2e0e6"><span class="bt" style="left:8.5px;top:14.67px">U…s</span></div>
<div class="b" style="left:2137px;top:958px;width:21px;background:#b2e0e6"></div>
<div class="b" style="left:2197px;top:958px;width:50px;background:#b2e0e6"></div>
<div class="b" style="left:2249px;top:958px;width:6px;background:#d7ecdf"></div>
<div class="b" style="left:2257px;top:958px;width:5px;background:#bce5e2"></div>
<div class="b" style="left:2271px;top:958px;width:4px;background:#a8dfa2"></div>
<div class="b" style="left:2278px;top:958px;width:5px;background:#f0dcd6"></div>
<div class="b" style="left:2285px;top:958px;width:5px;background:#dde8f4"></div>
<div class="b" style="left:2293px;top:958px;width:42px;background:#d7ecdf"></div>
<div class="b" style="left:2337px;top:958px;width:35px;background:#b2e0e6"></div>
<div class="b" style="left:2374px;top:958px;width:35px;background:#e1dbf8"></div>
<div class="b" style="left:2899px;top:958px;width:6.5px;background:#bce5e2"></div>
<div class="b" style="left:1920px;top:1000px;width:6px;background:#e3ecd2"></div>
<div class="b" style="left:1927px;top:1000px;width:12.5px;background:#e1dbf8"></div>
<div class="b" style="left:1977px;top:1000px;width:6px;background:#d7ecdf"></div>
<div class="b" style="left:1985px;top:1000px;width:63px;background:#b5e1d8"><span class="bt" style="left:8.5px;top:14.67px">C…</span></div>
<div class="b" style="left:2137px;top:1000px;width:6px;background:#cde9e3"></div>
<div class="b" style="left:2145px;top:1000px;width:12px;background:#cde9e3"></div>
<div class="b" style="left:2197px;top:1000px;width:20px;background:#dde8f4"></div>
<div class="b" style="left:2219px;top:1000px;width:5px;background:#dde8f4"></div>
<div class="b" style="left:2226px;top:1000px;width:21px;background:#cde9e3"></div>
<div class="b" style="left:2249px;top:1000px;width:5px;background:#d7ecdf"></div>
<div class="b" style="left:2256px;top:1000px;width:6px;background:#e3ecd2"></div>
<div class="b" style="left:2271px;top:1000px;width:5px;background:#dde8f4"></div>
<div class="b" style="left:2278px;top:1000px;width:5px;background:#dde8f4"></div>
<div class="b" style="left:2285px;top:1000px;width:5px;background:#cde9e3"></div>
<div class="b" style="left:2293px;top:1000px;width:20px;background:#dde8f4"></div>
<div class="b" style="left:2315px;top:1000px;width:13px;background:#b2e0e6"></div>
<div class="b" style="left:2330px;top:1000px;width:5px;background:#e9c6ea"></div>
<div class="b" style="left:2344px;top:1000px;width:28px;background:#dde8f4"></div>
<div class="b" style="left:2374px;top:1000px;width:35px;background:#e1dbf8"></div>
<div class="b" style="left:2899px;top:1000px;width:6.5px;background:#cde9e3"></div>
<div class="b" style="left:1927px;top:1042px;width:6px;background:#e1dbf8"></div>
<div class="b" style="left:1934.5px;top:1042px;width:5px;background:#e1dbf8"></div>
<div class="b" style="left:1977px;top:1042px;width:6px;background:#b2e0e6"></div>
<div class="b" style="left:2249px;top:1042px;width:5px;background:#d9c9a0"></div>
<div class="b" style="left:2271px;top:1042px;width:5px;background:#bce5e2"></div>
<div class="b" style="left:2278px;top:1042px;width:5px;background:#bce5e2"></div>
<div class="b" style="left:2293px;top:1042px;width:5px;background:#bce5e2"></div>
<div class="b" style="left:2300px;top:1042px;width:13px;background:#bce5e2"></div>
<div class="b" style="left:2344px;top:1042px;width:20px;background:#bce5e2"></div>
<div class="b" style="left:2366px;top:1042px;width:6px;background:#bce5e2"></div>
<div class="b" style="left:2374px;top:1042px;width:27px;background:#e1dbf8"></div>
<div class="b" style="left:2403px;top:1042px;width:6px;background:#e1dbf8"></div>
<div class="b" style="left:1927px;top:1084px;width:6px;background:#e1dbf8"></div>
<div class="b" style="left:1934.5px;top:1084px;width:5px;background:#d7ecdf"></div>
<div class="b" style="left:1977px;top:1084px;width:6px;background:#bce5e2"></div>
<div class="b" style="left:2278px;top:1084px;width:5px;background:#dde8f4"></div>
<div class="b" style="left:2308px;top:1084px;width:5px;background:#d7ecdf"></div>
<div class="b" style="left:2352px;top:1084px;width:5px;background:#dde8f4"></div>
<div class="b" style="left:2359px;top:1084px;width:5px;background:#bce5e2"></div>
<div class="b" style="left:2366px;top:1084px;width:6px;background:#dde8f4"></div>
<div class="b" style="left:2374px;top:1084px;width:27px;background:#e1dbf8"></div>
<div class="b" style="left:2403px;top:1084px;width:6px;background:#bce5e2"></div>
<div class="b" style="left:1927px;top:1126px;width:5.5px;background:#cde9e3"></div>
<div class="b" style="left:1934.5px;top:1126px;width:5px;background:#e1dbf8"></div>
<div class="b" style="left:2278px;top:1126px;width:5px;background:#bce5e2"></div>
<div class="b" style="left:2308px;top:1126px;width:5px;background:#dde8f4"></div>
<div class="b" style="left:2352px;top:1126px;width:5px;background:#bce5e2"></div>
<div class="b" style="left:2359px;top:1126px;width:5px;background:#dde8f4"></div>
<div class="b" style="left:2366px;top:1126px;width:6px;background:#bce5e2"></div>
<div class="b" style="left:2374px;top:1126px;width:27px;background:#d7ecdf"></div>
<div class="b" style="left:1934.5px;top:1168px;width:5px;background:#e1dbf8"></div>
<div class="b" style="left:2308px;top:1168px;width:5px;background:#bce5e2"></div>
<div class="b" style="left:2352px;top:1168px;width:5px;background:#dde8f4"></div>
<div class="b" style="left:2359px;top:1168px;width:5px;background:#bce5e2"></div>
<div class="b" style="left:2374px;top:1168px;width:5px;background:#e3ecd2"></div>
<div class="b" style="left:2381px;top:1168px;width:20px;background:#dde8f4"></div>
<div class="b" style="left:1934.5px;top:1210px;width:5px;background:#e1dbf8"></div>
<div class="b" style="left:2352px;top:1210px;width:5px;background:#bce5e2"></div>
<div class="b" style="left:2381px;top:1210px;width:20px;background:#bce5e2"></div>
<div class="b" style="left:1934.5px;top:1252px;width:5px;background:#e1dbf8"></div>
<div class="b" style="left:2389px;top:1252px;width:12px;background:#d7ecdf"></div>
<div class="b" style="left:1934.5px;top:1294px;width:5px;background:#e1dbf8"></div>
<div class="b" style="left:2389px;top:1294px;width:12px;background:#dde8f4"></div>
<div class="b" style="left:1934.5px;top:1336px;width:5px;background:#e1dbf8"></div>
<div class="b" style="left:2389px;top:1336px;width:5px;background:#bce5e2"></div>
<div class="b" style="left:2396px;top:1336px;width:5px;background:#bce5e2"></div>
<div class="b" style="left:1934.5px;top:1378px;width:5px;background:#e3ecd2"></div>
<div class="b" style="left:2389px;top:1378px;width:5px;background:#cde9e3"></div>
<div class="g" style="left:2.35px;top:248px;height:1260px"></div>
<div class="g" style="left:171.95px;top:248px;height:1260px"></div>
<div class="g" style="left:341.55px;top:248px;height:1260px"></div>
<div class="g" style="left:511.15px;top:248px;height:1260px"></div>
<div class="g" style="left:680.75px;top:248px;height:1260px"></div>
<div class="g" style="left:850.35px;top:248px;height:1260px"></div>
<div class="g" style="left:1019.95px;top:248px;height:1260px"></div>
<div class="g" style="left:1189.55px;top:248px;height:1260px"></div>
<div class="g" style="left:1359.15px;top:248px;height:1260px"></div>
<div class="g" style="left:1528.75px;top:248px;height:1260px"></div>
<div class="g" style="left:1698.35px;top:248px;height:1260px"></div>
<div class="g" style="left:1867.95px;top:248px;height:1260px"></div>
<div class="g" style="left:2037.55px;top:248px;height:1260px"></div>
<div class="g" style="left:2207.15px;top:248px;height:1260px"></div>
<div class="g" style="left:2376.75px;top:248px;height:1260px"></div>
<div class="g" style="left:2546.35px;top:248px;height:1260px"></div>
<div class="g" style="left:2715.95px;top:248px;height:1260px"></div>
<div class="g" style="left:2885.55px;top:248px;height:1260px"></div>
<div class="a" style="left:2180.3px;top:412px;width:43px;height:40px;background:#3d3d3d"></div>
<svg class="a" style="left:2189.5px;top:422px" width="28" height="24" viewBox="0 0 28 24"><path d="M14 1.8 L26 22.5 L2 22.5 Z" fill="#f2c12e" stroke="#f2c12e" stroke-width="1.6" stroke-linejoin="round"/><rect x="12.5" y="6.3" width="3" height="10" rx="0.8" fill="#1f1f1f"/><rect x="12.5" y="17.6" width="3" height="2.8" rx="0.8" fill="#1f1f1f"/></svg>
<div class="a" style="left:2180.2px;top:412px;width:2.2px;height:428px;background:repeating-linear-gradient(to bottom,#2b2b33 0,#2b2b33 15.6px,transparent 15.6px,transparent 30px)"></div>
<div class="a" style="left:2475.3px;top:412px;width:43px;height:40px;background:#3d3d3d"></div>
<svg class="a" style="left:2484.5px;top:422px" width="28" height="24" viewBox="0 0 28 24"><path d="M14 1.8 L26 22.5 L2 22.5 Z" fill="#f2c12e" stroke="#f2c12e" stroke-width="1.6" stroke-linejoin="round"/><rect x="12.5" y="6.3" width="3" height="10" rx="0.8" fill="#1f1f1f"/><rect x="12.5" y="17.6" width="3" height="2.8" rx="0.8" fill="#1f1f1f"/></svg>
<div class="a" style="left:2475.2px;top:412px;width:2.2px;height:260px;background:repeating-linear-gradient(to bottom,#2b2b33 0,#2b2b33 15.6px,transparent 15.6px,transparent 30px)"></div>
<div class="a" style="left:2709.2px;top:412px;width:43px;height:40px;background:#3d3d3d"></div>
<svg class="a" style="left:2718.4px;top:422px" width="28" height="24" viewBox="0 0 28 24"><path d="M14 1.8 L26 22.5 L2 22.5 Z" fill="#f2c12e" stroke="#f2c12e" stroke-width="1.6" stroke-linejoin="round"/><rect x="12.5" y="6.3" width="3" height="10" rx="0.8" fill="#1f1f1f"/><rect x="12.5" y="17.6" width="3" height="2.8" rx="0.8" fill="#1f1f1f"/></svg>
<div class="a" style="left:2709.1px;top:412px;width:2.2px;height:344px;background:repeating-linear-gradient(to bottom,#2b2b33 0,#2b2b33 15.6px,transparent 15.6px,transparent 30px)"></div>
<div class="a" style="left:3px;top:6px;width:2909px;height:222.5px;border:1.5px solid #cbcbcb;border-radius:11px;background:#fff;box-shadow:0 4px 12px rgba(0,0,0,0.12),0 1px 2px rgba(0,0,0,0.06)"></div>
<div class="a" style="left:52px;top:32px;width:108.5px;height:53.5px;background:#f3f4f6;border-radius:7px"></div>
<div class="t" style="left:60px;top:47.68px;font-size:24px;color:#4a5568">Discover</div>
<div class="a" style="left:52.5px;top:102.5px;width:487px;height:55px;border:1.5px solid #c9d4e4;border-radius:5px;background:#fff"></div>
<div class="t" style="left:78px;top:116.83px;font-size:29.5px;color:#a3aec0">Search flamechart...</div>
<div class="a" style="left:638px;top:110px;width:52px;height:27.5px;border:2px solid #7d8796;border-radius:16px;background:#fff"></div>
<div class="a" style="left:642px;top:114px;width:24px;height:24px;border-radius:50%;background:#8f99a8"></div>
<div class="t" style="left:709.5px;top:109.87px;font-size:28.8px;color:#4a5568">Invert</div>
<div class="a" style="left:638px;top:158px;width:52px;height:27.5px;border:2px solid #7d8796;border-radius:16px;background:#fff"></div>
<div class="a" style="left:642px;top:162px;width:24px;height:24px;border-radius:50%;background:#8f99a8"></div>
<div class="t" style="left:709.5px;top:157.37px;font-size:28.8px;color:#4a5568">Cluster Libraries</div>
<div class="a" style="left:982px;top:32px;width:71px;height:54px;background:#f3f4f6;border-radius:7px"></div>
<div class="t" style="left:989px;top:47.68px;font-size:24px;color:#4a5568">Filter</div>
<div class="a" style="left:1021px;top:102.3px;width:56px;height:31.5px;border-radius:16px;background:#2a6bdb"></div>
<div class="a" style="left:1049px;top:105.8px;width:24.5px;height:24.5px;border-radius:50%;background:#fff"></div>
<div class="t" style="left:1093px;top:101.87px;font-size:28.8px;color:#4a5568">Insights</div>
<div class="a" style="left:1021px;top:150.3px;width:56px;height:31.5px;border-radius:16px;background:#2a6bdb"></div>
<div class="a" style="left:1049px;top:153.8px;width:24.5px;height:24.5px;border-radius:50%;background:#fff"></div>
<div class="t" style="left:1093px;top:149.97px;font-size:28.8px;color:#4a5568">Collapse System Calls</div>
<div class="t" style="left:1412px;top:100.39px;font-size:20.8px;color:#4a5568">Minimum Duration</div>
<div class="a" style="left:1412px;top:126.5px;width:478px;height:55.5px;border:1.5px solid #c9d4e4;border-radius:5px;background:#fff"></div>
<div class="t" style="left:1429px;top:140.6px;font-size:29.3px;color:#a3aec0">10 milliseconds</div>
<div class="a" style="left:1926px;top:128px;width:200px;height:47.5px;border-radius:5px;background:#2b6ddd"></div>
<svg class="a" style="left:1951px;top:143px" width="24" height="20" viewBox="0 0 24 20"><path d="M1.5 1 V18.5 H23" stroke="#9cc0f5" stroke-width="2.2" fill="none"/><circle cx="7" cy="13" r="1.3" fill="#fff"/><circle cx="11" cy="8" r="1.3" fill="#fff"/><circle cx="15" cy="11" r="1.3" fill="#fff"/><circle cx="19" cy="5" r="1.3" fill="#fff"/><circle cx="14" cy="4" r="1.3" fill="#fff"/></svg>
<div class="t" style="left:1981px;top:141.83px;font-size:23px;color:#fff">Run Details</div>
<div class="a" style="left:980px;top:219px;width:400px;height:160px;background:#1a1a1a;border-radius:8px"></div>
<svg class="a" style="left:1167px;top:206px" width="26" height="14" viewBox="0 0 26 14"><path d="M0 14 L13 1 L26 14 Z" fill="#1a1a1a"/></svg>
<div class="t" style="left:980px;width:400px;text-align:center;top:238.46px;font-size:24.5px;color:#fff">Collapse consecutive system</div>
<div class="t" style="left:980px;width:400px;text-align:center;top:270.06px;font-size:24.5px;color:#fff">calls so only the first is shown.</div>
<div class="t" style="left:980px;width:400px;text-align:center;top:302.16px;font-size:24.5px;color:#fff">Used to more easily see</div>
<div class="t" style="left:980px;width:400px;text-align:center;top:334.06px;font-size:24.5px;color:#fff">application code behavior.</div>
<svg class="a" style="left:1053px;top:156px" width="40" height="50" viewBox="0 0 40 50"><g transform="translate(10.1,10.3)"><path d="M0 0 L0.3 21.8 L5 17.4 L10.3 28.6 L13.2 27.2 L8.4 16 L15.6 16 Z" fill="#000" stroke="#fff" stroke-width="2.4" stroke-linejoin="round" paint-order="stroke" style="filter:drop-shadow(1px 2px 1.5px rgba(0,0,0,0.3))"/></g></svg>
</body></html>
